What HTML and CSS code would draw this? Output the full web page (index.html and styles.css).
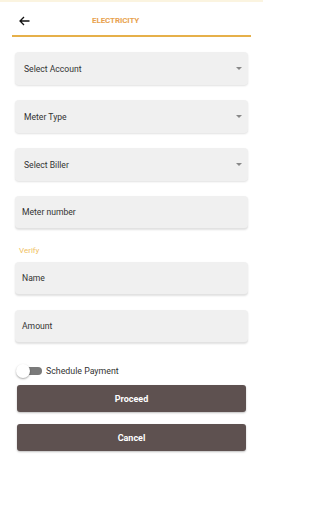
FILE: index.html
```html
<!DOCTYPE html>
<html>
<head>
<meta charset="utf-8">
<link rel="stylesheet" href="styles.css">
</head>
<body>
<div class="page">
<div class="topstrip"></div>
<header class="header">
  <span class="back">
    <svg width="11" height="10" viewBox="0 0 11 10"><path d="M10.5 5H1.2M5 1L1 5l4 4" fill="none" stroke="#111" stroke-width="1.3"/></svg>
  </span>
  <span class="title">ELECTRICITY</span>
</header>
<main class="form">
  <div class="field select"><span>Select Account</span><i class="caret"></i></div>
  <div class="field select"><span>Meter Type</span><i class="caret"></i></div>
  <div class="field select"><span>Select Biller</span><i class="caret"></i></div>
  <div class="field input"><span>Meter number</span></div>
  <div class="verify">Verify</div>
  <div class="field input first"><span>Name</span></div>
  <div class="field input"><span>Amount</span></div>
  <div class="toggle-row">
    <span class="switch"><span class="track"></span><span class="knob"></span></span>
    <span class="toggle-label">Schedule Payment</span>
  </div>
  <button class="btn">Proceed</button>
  <button class="btn">Cancel</button>
</main>
</div>
</body>
</html>
```
FILE: styles.css
```css
html, body {
  margin: 0;
  padding: 0;
  background: #fff;
  font-family: Roboto, "Liberation Sans", sans-serif;
  color: #333;
}
.page {
  width: 263px;
  min-height: 512px;
}
.topstrip {
  height: 2px;
  background: #fbf4e0;
}
.header {
  margin: 0 12px;
  height: 35px;
  border-bottom: 2px solid #e6b04a;
  display: flex;
  align-items: center;
  box-sizing: border-box;
  padding-top: 4px;
}
.back {
  display: flex;
  margin-left: 7px;
  width: 73px;
}
.title {
  font-size: 8px;
  font-weight: 700;
  color: #e8a24e;
  letter-spacing: -0.1px;
}
.form {
  padding: 15px 15px 0 15px;
  display: flex;
  flex-direction: column;
}
.field {
  height: 33px;
  background: #f0f0f0;
  border-radius: 4px;
  box-shadow: 0 1px 2px rgba(0,0,0,0.12);
  display: flex;
  align-items: center;
  justify-content: space-between;
  padding: 0 6px 0 9px;
  margin-bottom: 15px;
  font-size: 8.6px;
  color: #333;
  box-sizing: border-box;
}
.field.input {
  padding-left: 7px;
  border-bottom: 1px solid #e2e2e2;
}
.caret {
  width: 0;
  height: 0;
  border-left: 3px solid transparent;
  border-right: 3px solid transparent;
  border-top: 3px solid #888;
}
.verify {
  font-size: 8px;
  color: #f0bf64;
  margin: 2px 0 0 4px;
  height: 16px;
  line-height: 10px;
}
.toggle-row {
  display: flex;
  align-items: center;
  margin-top: 6px;
  height: 14px;
  gap: 3px;
}
.switch {
  position: relative;
  width: 28px;
  height: 14px;
  display: block;
}
.track {
  position: absolute;
  left: 8px;
  top: 3px;
  width: 19px;
  height: 8px;
  border-radius: 4px;
  background: #7a7a7a;
}
.knob {
  position: absolute;
  left: 1px;
  top: 0;
  width: 14px;
  height: 14px;
  border-radius: 50%;
  background: #fff;
  box-shadow: 0 1px 2px rgba(0,0,0,0.35);
}
.toggle-label {
  font-size: 8.8px;
  color: #333;
}
.btn {
  margin: 7px 2px 0 2px;
  height: 27px;
  border: none;
  border-radius: 3px;
  background: #5e5150;
  color: #fff;
  font-family: Roboto, "Liberation Sans", sans-serif;
  font-size: 9px;
  font-weight: 700;
  box-shadow: 0 1px 2px rgba(0,0,0,0.25);
}
.btn + .btn {
  margin-top: 12px;
}
```
